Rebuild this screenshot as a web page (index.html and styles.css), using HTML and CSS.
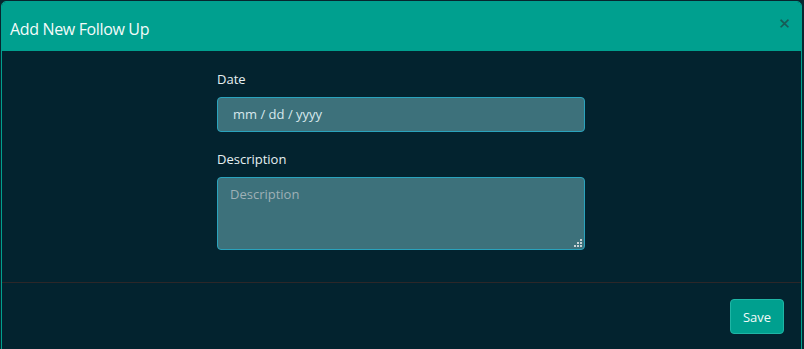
FILE: index.html
```html
<!DOCTYPE html>
<html>
<head>
<meta charset="utf-8">
<link rel="stylesheet" href="styles.css">
</head>
<body>
<div class="modal">
  <div class="modal-header">
    <h5 class="modal-title">Add New Follow Up</h5>
    <span class="close">&times;</span>
  </div>
  <div class="modal-body">
    <div class="form">
      <div class="form-group">
        <label class="label">Date</label>
        <div class="input date">mm / dd / yyyy</div>
      </div>
      <div class="form-group">
        <label class="label">Description</label>
        <div class="input textarea"><span class="placeholder">Description</span>
          <svg class="grip" width="8" height="8" viewBox="0 0 8 8"><rect x="6" y="0" width="2" height="2" fill="#c9d3d6"/><rect x="3" y="3" width="2" height="2" fill="#c9d3d6"/><rect x="6" y="3" width="2" height="2" fill="#c9d3d6"/><rect x="0" y="6" width="2" height="2" fill="#c9d3d6"/><rect x="3" y="6" width="2" height="2" fill="#c9d3d6"/><rect x="6" y="6" width="2" height="2" fill="#c9d3d6"/></svg>
        </div>
      </div>
    </div>
  </div>
  <div class="modal-footer">
    <button class="btn">Save</button>
  </div>
</div>
</body>
</html>
```
FILE: styles.css
```css
html, body {
  margin: 0;
  padding: 0;
  background: #07262f;
  height: 349px;
  overflow: hidden;
  font-family: "Open Sans", "Noto Sans", sans-serif;
}
.modal {
  margin: 1px 0 0 1px;
  width: 799px;
  height: 360px;
  border: 1px solid #00a08f;
  border-radius: 5px;
  background: #03232f;
  display: flex;
  flex-direction: column;
  overflow: hidden;
}
.modal-header {
  background: #00a08f;
  height: 48px;
  display: flex;
  align-items: center;
  justify-content: space-between;
  padding: 0 11px 0 8px;
  border-bottom: 1px solid #00a08f;
}
.modal-title {
  margin: 6px 0 0 0;
  font-size: 16px;
  font-weight: 400;
  color: #f4fbfa;
  letter-spacing: -0.35px;
}
.close {
  font-size: 19px;
  font-weight: 400;
  color: #1a5a55;
  line-height: 1;
  margin-bottom: 5px;
  -webkit-text-stroke: 0.4px #1a5a55;
}
.modal-body {
  padding: 16px 0 16px 0;
  border-bottom: 1px solid #2c2729;
  display: flex;
  justify-content: center;
}
.form {
  width: 368px;
  margin-right: 1px;
}
.form-group {
  margin-bottom: 15px;
  display: flex;
  flex-direction: column;
}
.form-group:last-child {
  margin-bottom: 16px;
}
.label {
  font-size: 13px;
  color: #e6f0f2;
  line-height: 20px;
  margin-top: 2px;
  margin-bottom: 8px;
}
.input {
  box-sizing: border-box;
  background: #3d717b;
  border: 1px solid #2aa3bd;
  border-radius: 4px;
  font-size: 13px;
  color: #d7e8ec;
}
.date {
  height: 35px;
  line-height: 33px;
  padding-left: 15px;
}
.textarea {
  height: 73px;
  padding: 7px 12px;
  position: relative;
}
.placeholder {
  color: #9eb0b6;
}
.grip {
  position: absolute;
  right: 2px;
  bottom: 2px;
}
.modal-footer {
  display: flex;
  justify-content: flex-end;
  padding: 16px 17px;
}
.btn {
  background: #00a08f;
  border: 1px solid #1fb5a5;
  border-radius: 4px;
  color: #f4fbfa;
  font-family: "Open Sans", "Noto Sans", sans-serif;
  font-size: 13px;
  width: 54px;
  height: 35px;
  padding: 0;
}
```
